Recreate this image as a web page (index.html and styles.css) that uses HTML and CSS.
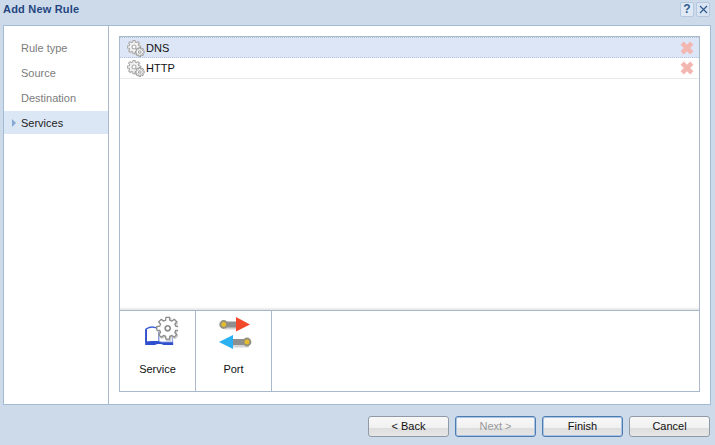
FILE: index.html
```html
<!DOCTYPE html>
<html lang="en">
<head>
<meta charset="utf-8">
<title>Add New Rule</title>
<link rel="stylesheet" href="styles.css">
</head>
<body>
<svg class="defs" width="0" height="0" aria-hidden="true">
  <defs>
    <polygon id="gear" points="7.79,4.5 9.71,7.05 7.05,9.71 4.5,7.79 2.33,8.69 1.88,11.85 -1.88,11.85 -2.33,8.69 -4.5,7.79 -7.05,9.71 -9.71,7.05 -7.79,4.5 -8.69,2.33 -11.85,1.88 -11.85,-1.88 -8.69,-2.33 -7.79,-4.5 -9.71,-7.05 -7.05,-9.71 -4.5,-7.79 -2.33,-8.69 -1.88,-11.85 1.88,-11.85 2.33,-8.69 4.5,-7.79 7.05,-9.71 9.71,-7.05 7.79,-4.5 8.69,-2.33 11.85,-1.88 11.85,1.88 8.69,2.33"/>
    <symbol id="gears" viewBox="0 0 18 18">
      <g transform="translate(7.6 8.6) scale(.55)" fill="#d8d8d8" stroke="#d8d8d8" stroke-width="2"><use href="#gear"/></g>
      <g transform="translate(7 8) scale(.55)" fill="#f4f4f4" stroke="#ababab" stroke-width="2"><use href="#gear"/><circle r="3.6" fill="#fff"/></g>
      <g transform="translate(12.8 13) scale(.37)" fill="#fff" stroke="#a0a0a0" stroke-width="2.8"><use href="#gear"/><circle r="3.6" fill="#fff"/></g>
    </symbol>
    <symbol id="cross" viewBox="0 0 14 14">
      <path d="M2.2 2.2 11.8 11.8M11.8 2.2 2.2 11.8" stroke="#f3b7b1" stroke-width="4.6" fill="none"/>
    </symbol>
  </defs>
</svg>
<div class="dialog">
  <header class="titlebar">
    <h1 class="title">Add New Rule</h1>
    <div class="title-actions">
      <button class="title-btn" type="button">?</button>
      <button class="title-btn title-close" type="button">
        <svg width="9" height="9" viewBox="0 0 9 9"><path d="M1 1 8 8M8 1 1 8" stroke="#2f5a8e" stroke-width="1.2" fill="none"/></svg>
      </button>
    </div>
  </header>
  <main class="panel">
    <nav class="steps">
      <div class="step">Rule type</div>
      <div class="step">Source</div>
      <div class="step">Destination</div>
      <div class="step step-active"><span class="step-arrow"></span>Services</div>
    </nav>
    <section class="content">
      <div class="box">
        <ul class="list">
          <li class="row row-selected">
            <svg class="row-icon"><use href="#gears"/></svg>
            <span class="row-label">DNS</span>
            <svg class="row-delete"><use href="#cross"/></svg>
          </li>
          <li class="row">
            <svg class="row-icon"><use href="#gears"/></svg>
            <span class="row-label">HTTP</span>
            <svg class="row-delete"><use href="#cross"/></svg>
          </li>
        </ul>
        <div class="tools">
          <div class="tool">
            <svg class="tool-icon" width="40" height="40" viewBox="0 0 40 40">
              <path d="M8 14C12 11.5 17 11.5 21 14.5V27H8Z" fill="#fff" stroke="#3f60d4" stroke-width="1.3"/>
              <path d="M21 14.5C25 12 30 12 34.6 13.5V27H21Z" fill="#fff" stroke="#8f9fe0" stroke-width="1"/>
              <path d="M7.2 14.5V30H17C19 28.6 23.5 28.6 25.5 30H35.2V27.2H23.5C20 25.6 13.5 25.6 9 27.2V14Z" fill="#2f4fcf"/>
              <g transform="translate(30.6 14.2) scale(.92)" fill="#cfcfcf" stroke="#cfcfcf" stroke-width="2"><use href="#gear"/></g>
              <g transform="translate(29.7 13.3) scale(.92)" fill="#fff" stroke="#8b8b8b" stroke-width="1.4"><use href="#gear"/><circle r="2.8" fill="#fff" stroke-width="1.8"/></g>
            </svg>
            <span class="tool-label">Service</span>
          </div>
          <div class="tool">
            <svg class="tool-icon" width="40" height="40" viewBox="0 0 40 40">
              <rect x="11" y="8.5" width="15" height="6" fill="#d4d4d4"/>
              <rect x="17" y="26.5" width="18" height="6" fill="#d4d4d4"/>
              <rect x="10" y="6.5" width="14" height="6" fill="#8f8f8f"/>
              <circle cx="9.7" cy="9.5" r="3.4" fill="#e5bd2c" stroke="#94917f" stroke-width="2"/>
              <path d="M22 2 36 9.5 22 16.5Z" fill="#f2492b"/>
              <rect x="17" y="24" width="16" height="6" fill="#8f8f8f"/>
              <circle cx="33" cy="27" r="3.4" fill="#e5bd2c" stroke="#94917f" stroke-width="2"/>
              <path d="M19 20 5 27 19 34Z" fill="#2bb0f2"/>
            </svg>
            <span class="tool-label">Port</span>
          </div>
        </div>
      </div>
    </section>
  </main>
  <footer class="footer">
    <button class="btn" type="button">&lt; Back</button>
    <button class="btn btn-focus btn-disabled" type="button">Next &gt;</button>
    <button class="btn btn-focus" type="button">Finish</button>
    <button class="btn" type="button">Cancel</button>
  </footer>
</div>
</body>
</html>
```
FILE: styles.css
```css
* { box-sizing: border-box; }
html, body { margin: 0; padding: 0; }
body {
  width: 715px;
  height: 445px;
  overflow: hidden;
  background: #cddaea;
  font-family: "Liberation Sans", Arial, sans-serif;
  font-size: 11px;
  color: #111;
}
.defs { display: block; height: 0; }
.dialog { display: flex; flex-direction: column; height: 445px; }

.titlebar {
  height: 25px;
  flex: none;
  display: flex;
  justify-content: space-between;
  padding: 2px 5px 0 3px;
}
.title {
  margin: 0;
  font-size: 11px;
  font-weight: bold;
  line-height: 14px;
  letter-spacing: .2px;
  color: #24467f;
}
.title-actions { display: flex; gap: 2px; }
.title-btn {
  width: 14px;
  height: 15px;
  padding: 0;
  border: 1px solid #b5c8de;
  border-radius: 2px;
  background: #dfeaf6;
  color: #2f5a8e;
  font: bold 12px/13px "Liberation Sans", sans-serif;
  display: flex;
  align-items: center;
  justify-content: center;
}
.title-close { background: #d8e4f2; }

.panel {
  height: 380px;
  flex: none;
  margin: 0 4px 0 3px;
  display: flex;
  background: #fff;
  border: 1px solid #a4bbd6;
}
.steps {
  width: 105px;
  flex: none;
  padding-top: 10px;
  border-right: 1px solid #a8b9cb;
  display: flex;
  flex-direction: column;
  gap: 2px;
}
.step {
  height: 23px;
  line-height: 25px;
  padding-left: 17px;
  color: #7c7c7c;
  position: relative;
}
.step-active { background: #dce7f6; color: #222; }
.step-arrow {
  position: absolute;
  left: 8px;
  top: 8px;
  border-left: 4px solid #86a9d3;
  border-top: 4px solid transparent;
  border-bottom: 4px solid transparent;
}

.content { flex: 1; padding: 10px 10px 12px; display: flex; }
.box {
  flex: 1;
  display: flex;
  flex-direction: column;
  border: 1px solid #a8b9cb;
}
.list {
  flex: 1;
  list-style: none;
  margin: 0;
  padding: 0;
  box-shadow: inset 0 -3px 3px -2px #d8d8d8;
}
.row {
  height: 21px;
  display: flex;
  align-items: center;
  padding: 0 5px 0 7px;
  border-bottom: 1px solid #e8eaec;
}
.row-selected {
  background: #dce6f6;
  border: 1px dotted #b4c6de;
  border-width: 1px 0;
  padding-left: 7px;
}
.row-icon { width: 18px; height: 18px; flex: none; }
.row-label { flex: 1; padding-left: 1px; color: #111; }
.row-delete { width: 14px; height: 14px; flex: none; }

.tools {
  height: 81px;
  flex: none;
  display: flex;
  border-top: 1px solid #a8b9cb;
}
.tool {
  width: 76px;
  display: flex;
  flex-direction: column;
  align-items: center;
  border-right: 1px solid #a8b9cb;
  padding-top: 4px;
}
.tool-icon { display: block; }
.tool-label { margin-top: 7px; line-height: 14px; color: #111; }

.footer {
  flex: 1;
  display: flex;
  justify-content: flex-end;
  gap: 6px;
  padding: 11px 5px 0 0;
}
.btn {
  width: 81px;
  height: 21px;
  padding: 0;
  border: 1px solid #8f9aa6;
  border-radius: 3px;
  background: linear-gradient(#f8f8f8 0, #f1f1f1 55%, #dedede 60%, #e6e6e6 100%);
  font: 11px/19px "Liberation Sans", sans-serif;
  color: #111;
}
.btn-focus { border: 1px solid #4d7cb3; box-shadow: inset 0 0 0 1px #a9c4e2; }
.btn-disabled { color: #999; }
```
